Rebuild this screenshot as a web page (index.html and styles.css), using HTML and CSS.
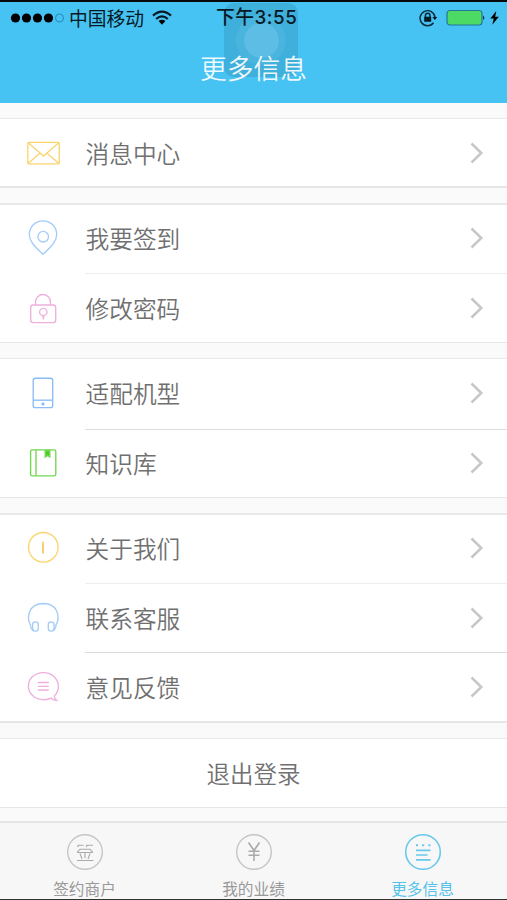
FILE: index.html
```html
<!DOCTYPE html>
<html lang="zh-CN">
<head>
<meta charset="utf-8">
<title>更多信息</title>
<link rel="stylesheet" href="styles.css">
</head>
<body>
<div class="screen">
  <header class="header">
    <div class="status">
      <div class="status-left">
        <svg class="signal" width="56" height="12" viewBox="0 0 56 12"><circle cx="5.5" cy="6" r="4.6"/><circle cx="16.5" cy="6" r="4.6"/><circle cx="27.5" cy="6" r="4.6"/><circle cx="38.5" cy="6" r="4.6"/><circle class="hollow" cx="49.5" cy="6" r="4"/></svg>
        <span class="carrier">中国移动</span>
        <svg class="wifi" width="20" height="16" viewBox="0 0 20 16"><path d="M1 5.7Q10-2.5 19 5.7M4.2 9Q10 3.8 15.8 9"/><path class="solid" d="M6.6 11.1Q10 8.2 13.4 11.1L10 14.8Z"/></svg>
      </div>
      <span class="time">下午3:55</span>
      <div class="status-right">
        <svg class="lock-rotate" width="19" height="18" viewBox="0 0 19 18"><path d="M14.5 13.8A7.5 7.5 0 1 1 16 8.2"/><path d="M6.4 8V6.5a2.3 2.3 0 0 1 4.6 0V8"/><path class="solid" d="M5.2 7.7h7v5h-7zM13.3 8h5l-2.5 3z"/></svg>
        <svg class="battery" width="40" height="18" viewBox="0 0 40 18"><rect x="1" y="1.5" width="35" height="14.5" rx="3"/><path d="M37.2 6.5q2.3 2.3 0 4.6z"/></svg>
        <svg class="bolt" width="9" height="14" viewBox="0 0 9 14"><path d="M6.3 0L.3 7.6h3.5L2.3 13.8 8.8 5.7H5.2z"/></svg>
      </div>
    </div>
    <h1 class="title">更多信息</h1>
    <div class="assist"><div class="assist-ring"><div class="assist-dot"></div></div></div>
  </header>

  <main class="content">
    <section class="group first">
      <a class="row"><svg class="icon yellow" viewBox="0 0 36 36"><rect x="2.8" y="7.3" width="31.5" height="21.5" rx="1"/><path d="M3.5 8l11.8 10.3L18.5 21l3.2-2.7L33.5 8M3.5 28L15 18.3M33.5 28L22 18.3"/></svg><span class="label">消息中心</span><svg class="chevron" viewBox="0 0 14 22"><path d="M1.5 1.5L11.3 11 1.5 20.5"/></svg></a>
    </section>
    <section class="group second">
      <a class="row"><svg class="icon blue" viewBox="0 0 36 36"><path d="M18 34.3C11.5 28 4.3 22.3 4.3 14.5a13.7 13.7 0 0 1 27.4 0C31.7 22.3 24.5 28 18 34.3z"/><circle cx="18.2" cy="16.7" r="5.3"/></svg><span class="label">我要签到</span><svg class="chevron" viewBox="0 0 14 22"><path d="M1.5 1.5L11.3 11 1.5 20.5"/></svg></a>
      <a class="row faint"><svg class="icon pink" viewBox="0 0 36 36"><rect x="5.7" y="15" width="25" height="17.6" rx="2.5"/><path d="M10.5 15v-3a7.5 7.5 0 0 1 15 0v3M17.3 27h2M18.3 25.5v4"/><circle cx="18.3" cy="22" r="3.7"/></svg><span class="label">修改密码</span><svg class="chevron" viewBox="0 0 14 22"><path d="M1.5 1.5L11.3 11 1.5 20.5"/></svg></a>
    </section>
    <section class="group third">
      <a class="row"><svg class="icon blue strong" viewBox="0 0 36 36"><rect x="8.2" y="3.2" width="19.5" height="29.4" rx="2.2"/><path d="M8.2 25.2h19.5"/><circle class="solid" cx="18" cy="28.9" r=".9"/></svg><span class="label">适配机型</span><svg class="chevron" viewBox="0 0 14 22"><path d="M1.5 1.5L11.3 11 1.5 20.5"/></svg></a>
      <a class="row"><svg class="icon green" viewBox="0 0 36 36"><rect x="5.6" y="4.8" width="25.2" height="26" rx="1.6"/><path d="M11 4.8v26"/><path class="solid" d="M20.2 5.5h4.6v6.5l-2.3-1.6-2.3 1.6z"/></svg><span class="label">知识库</span><svg class="chevron" viewBox="0 0 14 22"><path d="M1.5 1.5L11.3 11 1.5 20.5"/></svg></a>
    </section>
    <section class="group fourth">
      <a class="row"><svg class="icon yellow" viewBox="0 0 36 36"><circle cx="18.3" cy="17.3" r="14.8"/><path class="info" d="M18 11.8v1.7M18 13.8v9.7"/></svg><span class="label">关于我们</span><svg class="chevron" viewBox="0 0 14 22"><path d="M1.5 1.5L11.3 11 1.5 20.5"/></svg></a>
      <a class="row faint"><svg class="icon blue" viewBox="0 0 36 36"><path d="M5.5 25C1.5 18 3 3.7 18.3 3.5 33.8 3.7 35 18 31 25"/><rect x="7.6" y="21.8" width="5.7" height="9.3" rx="2.6"/><rect x="23.3" y="21.8" width="5.7" height="9.3" rx="2.6"/><path d="M5.5 24.5q0 5 3.7 6.2M31 24.5q0 5-3.7 6.2"/></svg><span class="label">联系客服</span><svg class="chevron" viewBox="0 0 14 22"><path d="M1.5 1.5L11.3 11 1.5 20.5"/></svg></a>
      <a class="row"><svg class="icon pink" viewBox="0 0 36 36"><path d="M26.5 29.2C21 31.6 14 31.2 9.3 28 2 23 1.6 13.5 7.3 7.8 13 2.2 23.5 2.2 29 7.6 34.8 13.3 34.8 21.8 29.3 27q.2 3 2.3 4.4-3.4.2-5.1-2.2z"/><path d="M12.8 13.5h11M12.8 17.3h11M12.8 21h11"/></svg><span class="label">意见反馈</span><svg class="chevron" viewBox="0 0 14 22"><path d="M1.5 1.5L11.3 11 1.5 20.5"/></svg></a>
    </section>
    <section class="group fifth"><a class="logout">退出登录</a></section>
  </main>

  <nav class="tabs">
    <a class="tab"><svg class="tab-icon" viewBox="0 0 38 38"><circle cx="19" cy="19" r="17.3"/><path d="M11.5 12.2h6M20 12.2h7M13 12l-1.5 2M21.5 12L20 14M14 16.2h10M11 19.5h16M14 16.2l-3 3.3M24 16.2l3 3.3M14 20.5l2 5.5M19 20v5M24 20.5L22 26M11 27.5h16.5"/></svg><span>签约商户</span></a>
    <a class="tab"><svg class="tab-icon yen" viewBox="0 0 38 38"><circle cx="19" cy="19" r="17.3"/><path d="M13.5 9.5L19 17.5 24.5 9.5M19 17.5v10.5M13.5 18.3h11M13.5 22.3h11"/></svg><span>我的业绩</span></a>
    <a class="tab active"><svg class="tab-icon" viewBox="0 0 38 38"><circle cx="19" cy="19" r="17.3"/><path d="M12 17.4h14.5M12 22h11.5M12 26.9h14.5"/><path class="dots" d="M12 12.2h2M18.2 12.2h2M24.4 12.2h2"/></svg><span>更多信息</span></a>
  </nav>
</div>
</body>
</html>
```
FILE: styles.css
```css
* { box-sizing: border-box; }
body {
  margin: 0;
  font-family: "Noto Sans CJK SC", sans-serif;
  font-weight: 350;
  color: #707070;
  background: #fafafa;
}
svg { display: block; flex: none; fill: none; }
.screen {
  display: flex;
  flex-direction: column;
  width: 507px;
  height: 900px;
  overflow: hidden;
}
.header {
  position: relative;
  height: 103px;
  border-top: 2px solid #05090c;
  background: #46c2f3;
}
.status {
  position: relative;
  z-index: 1;
  display: grid;
  grid-template-columns: 1fr 77px 1fr;
  align-items: center;
  height: 32px;
  padding: 0 8px 0 10px;
  color: #071923;
  font-size: 18.8px;
  font-weight: 400;
  line-height: 32px;
}
.status-left, .status-right { display: flex; align-items: center; }
.status-right { justify-content: flex-end; }
.signal { fill: #000; }
.signal .hollow { fill: none; stroke: #248ab8; stroke-width: 1; }
.carrier { margin-left: 3px; }
.wifi { margin-left: 8px; stroke: #071923; stroke-width: 2.3; }
.wifi .solid { fill: #000; stroke: none; }
.time {
  font-family: "Inter", "Noto Sans CJK SC", sans-serif;
  font-size: 18.8px;
  font-weight: 500;
  letter-spacing: .5px;
  white-space: nowrap;
}
.lock-rotate { stroke: #0b2836; stroke-width: 1.4; }
.lock-rotate .solid { fill: #071923; stroke: none; }
.battery { margin-left: 8px; fill: #071923; }
.battery rect { fill: #4cd964; stroke: #23789a; stroke-width: 1.2; }
.bolt { margin-left: 4px; fill: #000; }
.title {
  position: relative;
  z-index: 1;
  margin: 13px 0 0;
  color: rgba(255, 255, 255, .92);
  font-size: 26.8px;
  font-weight: 350;
  line-height: 42px;
  text-align: center;
}
.assist {
  position: absolute;
  top: 1px;
  left: 224px;
  display: grid;
  place-items: center;
  width: 74px;
  height: 74px;
  border-radius: 10px;
  background: rgba(45, 125, 160, .27);
}
.assist-ring {
  display: grid;
  place-items: center;
  width: 50px;
  height: 50px;
  border-radius: 50%;
  background: rgba(110, 195, 230, .24);
}
.assist-dot {
  width: 35px;
  height: 35px;
  border-radius: 50%;
  background: rgba(125, 205, 238, .38);
}
.content { display: flex; flex-direction: column; height: 718px; }
.group {
  flex: none;
  height: 140px;
  border-top: 1px solid #e9e9e9;
  border-bottom: 1px solid #e6e6e6;
  background: #fff;
  display: flex;
  flex-direction: column;
}
.group + .group { margin-top: 15px; }
.first { height: 70px; margin-top: 15px; border-bottom-width: 2px; }
.second { border-top-width: 2px; }
.fourth { height: 210px; border-top-width: 2px; border-bottom-width: 2px; }
.fifth { height: 70px; }
.row {
  position: relative;
  display: flex;
  flex: 1;
  align-items: center;
  padding: 0 23px 0 25px;
}
.second .row:first-child, .fourth .row:first-child { flex: 0 0 68px; padding-bottom: 2px; }
.third .row:first-child { padding-bottom: 1px; }
.row + .row::before {
  content: "";
  position: absolute;
  top: 0;
  left: 85px;
  right: 0;
  height: 1px;
  background: #dcdcdc;
}
.row.faint::before { background: #eee !important; }
.icon { width: 36px; height: 36px; stroke-width: 1.35; }
.yellow { stroke: #fad470; }
.blue { stroke: #a3cdf8; }
.blue.strong { stroke: #8abcf5; }
.pink { stroke: #eeb0dd; }
.green { stroke: #72d650; }
.blue .solid { fill: #8abcf5; }
.green .solid { fill: #49cd25; }
.yellow .info { stroke: #f3c34c; stroke-width: 1.6; }
.label { flex: 1; margin-left: 24.5px; font-size: 23.7px; line-height: 36px; }
.chevron { width: 14px; height: 22px; stroke: #c7c7c7; stroke-width: 2.5; }
.logout { margin: auto; font-size: 23.5px; line-height: 36px; }
.tabs {
  display: grid;
  grid-template-columns: repeat(3, 1fr);
  height: 79px;
  border-top: 2px solid #e5e5e5;
  border-bottom: 1px solid #333;
  background: #f7f7f7;
}
.tab {
  display: flex;
  flex-direction: column;
  align-items: center;
  color: #999;
  font-size: 15.7px;
  font-weight: 400;
  line-height: 22px;
}
.tab-icon { width: 38px; height: 38px; margin: 10px 0 7px; stroke: #c6c6c6; stroke-width: 1.4; }
.tab-icon path { stroke: #aaa; stroke-width: 1.1; }
.yen path { stroke-width: 1.6; }
.active { color: #55c2ea; }
.active .tab-icon, .active .tab-icon path { stroke: #68c9ed; stroke-width: 1.6; }
.active .tab-icon .dots { stroke-width: 2; }
```
